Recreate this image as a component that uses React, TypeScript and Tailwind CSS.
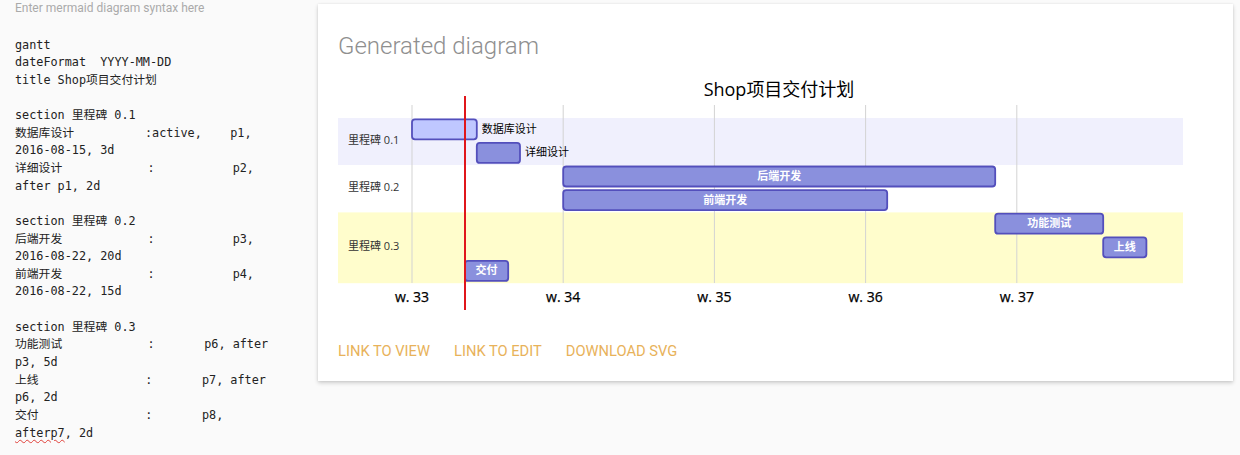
import React from "react";

const mono = { fontFamily: "'DejaVu Sans Mono','Noto Sans CJK SC',monospace" };
const svgFont = "'Open Sans','Noto Sans CJK SC',sans-serif";

const DAY = 21.6;
const X0 = 412;
const ROW = 23.6;
const TOP = 118;

type Task = { name: string; start: number; days: number; row: number; active?: boolean; outside?: boolean };

const tasks: Task[] = [
  { name: "数据库设计", start: X0, days: 3, row: 0, active: true, outside: true },
  { name: "详细设计", start: X0 + 3 * DAY, days: 2, row: 1, outside: true },
  { name: "后端开发", start: X0 + 7 * DAY, days: 20, row: 2 },
  { name: "前端开发", start: X0 + 7 * DAY, days: 15, row: 3 },
  { name: "功能测试", start: X0 + 27 * DAY, days: 5, row: 4 },
  { name: "上线", start: X0 + 32 * DAY, days: 2, row: 5 },
  { name: "交付", start: 465, days: 2, row: 6 },
];

const weeks = [33, 34, 35, 36, 37];

function Gantt() {
  return (
    <svg width={880} height={245} viewBox="338 70 880 245" className="block">
      <text x={779} y={96} textAnchor="middle" fontSize={18} fill="#000" fontFamily={svgFont}>
        Shop项目交付计划
      </text>
      <rect x={338} y={TOP} width={845} height={ROW * 2} fill="#f0f0fd" />
      <rect x={338} y={TOP + ROW * 2} width={845} height={ROW * 2} fill="#ffffff" />
      <rect x={338} y={TOP + ROW * 4} width={845} height={ROW * 3} fill="#fffdcc" />
      {weeks.map((w, i) => {
        const x = X0 + i * 7 * DAY;
        return (
          <g key={w}>
            <line x1={x} y1={105} x2={x} y2={283} stroke="#d3d3d3" strokeWidth={1} />
            <text x={x} y={302} textAnchor="middle" fontSize={14} fill="#000" fontFamily={svgFont} stroke="#000" strokeWidth={0.25}>
              w. {w}
            </text>
          </g>
        );
      })}
      <text x={348} y={TOP + ROW - 1} dominantBaseline="middle" fontSize={11} fill="#333" fontFamily={svgFont}>
        里程碑 0.1
      </text>
      <text x={348} y={TOP + ROW * 3 - 1} dominantBaseline="middle" fontSize={11} fill="#333" fontFamily={svgFont}>
        里程碑 0.2
      </text>
      <text x={348} y={TOP + ROW * 5.5 - 1} dominantBaseline="middle" fontSize={11} fill="#333" fontFamily={svgFont}>
        里程碑 0.3
      </text>
      {tasks.map((t) => {
        const y = TOP + t.row * ROW + 1.3;
        const w = t.days * DAY;
        return (
          <g key={t.name}>
            <rect
              x={t.start}
              y={y}
              width={w}
              height={20}
              rx={3}
              ry={3}
              fill={t.active ? "#bfc7ff" : "#8a90dd"}
              stroke="#534fbc"
              strokeWidth={1.8}
            />
            {t.outside ? (
              <text x={t.start + w + 5} y={y + 10.5} dominantBaseline="middle" fontSize={11} fill="#000" fontFamily={svgFont}>
                {t.name}
              </text>
            ) : (
              <text
                x={t.start + w / 2}
                y={y + 10.5}
                dominantBaseline="middle"
                textAnchor="middle"
                fontSize={11}
                fill="#fff"
                fontWeight={600}
                fontFamily={svgFont}
              >
                {t.name}
              </text>
            )}
          </g>
        );
      })}
      <line x1={465} y1={96} x2={465} y2={310} stroke="#e0161b" strokeWidth={2} />
    </svg>
  );
}

const code: string[] = [
  "gantt",
  "dateFormat  YYYY-MM-DD",
  "title Shop项目交付计划",
  "",
  "section 里程碑 0.1",
  "数据库设计          :active,    p1,",
  "2016-08-15, 3d",
  "详细设计            :           p2,",
  "after p1, 2d",
  "",
  "section 里程碑 0.2",
  "后端开发            :           p3,",
  "2016-08-22, 20d",
  "前端开发            :           p4,",
  "2016-08-22, 15d",
  "",
  "section 里程碑 0.3",
  "功能测试            :       p6, after",
  "p3, 5d",
  "上线               :       p7, after",
  "p6, 2d",
  "交付               :       p8,",
];

export default function App() {
  return (
    <div className="flex h-[455px] w-full overflow-hidden bg-[#fafafa]">
      <div className="w-[318px] shrink-0 pl-[15px]">
        <div
          className="text-[12px] leading-[16px] text-[#aaaaaa]"
          style={{ fontFamily: "Roboto, sans-serif" }}
        >
          Enter mermaid diagram syntax here
        </div>
        <div className="mt-[20.5px] text-[11.8px] leading-[17.65px] text-[#222]" style={mono}>
          {code.map((l, i) => (
            <div key={i} className="h-[17.65px] whitespace-pre">
              {l}
            </div>
          ))}
          <div className="h-[17.65px] whitespace-pre">
            <span className="underline decoration-wavy decoration-[#e0403a] decoration-1 underline-offset-2">afterp7</span>
            , 2d
          </div>
        </div>
      </div>
      <div className="mt-[4px] h-[377px] w-[915px] shrink-0 bg-white pl-[20px] pt-[26px] pb-[18px] shadow-[0_2px_4px_rgba(0,0,0,0.18),0_0_2px_rgba(0,0,0,0.08)]">
        <div
          className="text-[24px] font-light leading-[32px] text-[#8f8f8f]"
          style={{ fontFamily: "Roboto, sans-serif" }}
        >
          Generated diagram
        </div>
        <div className="mt-[8px]">
          <Gantt />
        </div>
        <div
          className="mt-[24px] flex gap-6 text-[14.7px] leading-[24px] text-[#e8b25a]"
          style={{ fontFamily: "Roboto, sans-serif" }}
        >
          <span>LINK TO VIEW</span>
          <span>LINK TO EDIT</span>
          <span>DOWNLOAD SVG</span>
        </div>
      </div>
    </div>
  );
}
